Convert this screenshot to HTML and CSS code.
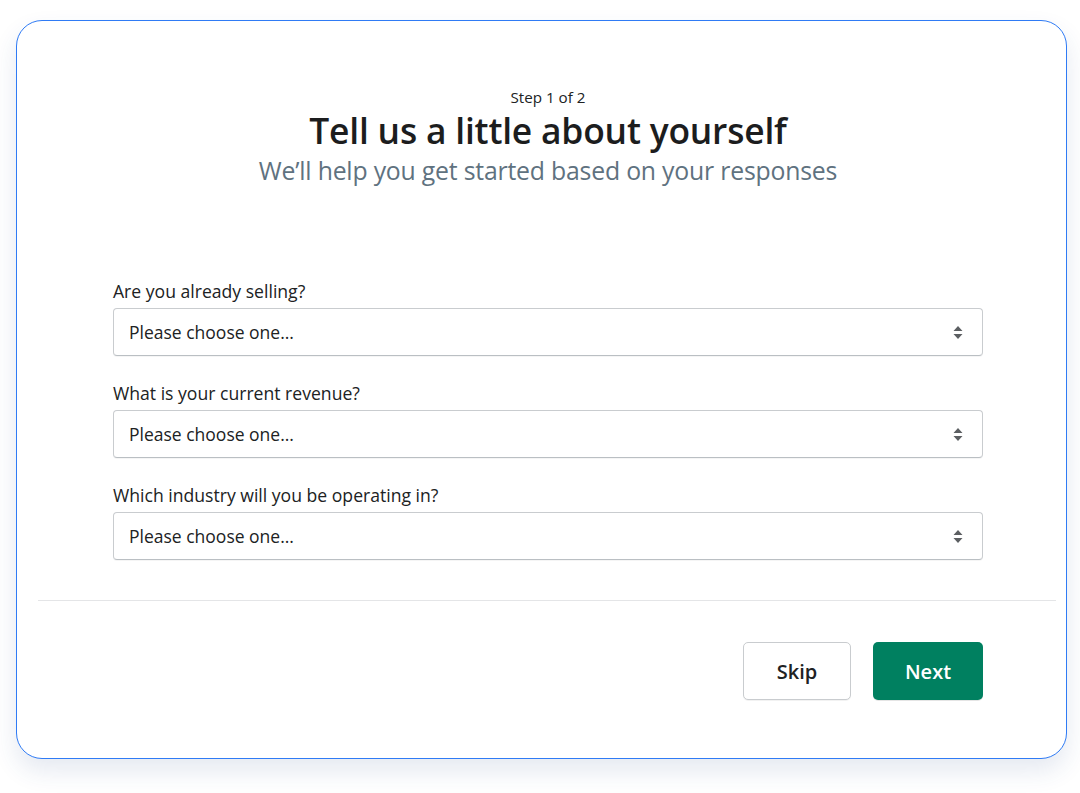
FILE: index.html
```html
<!DOCTYPE html>
<html lang="en">
<head>
<meta charset="utf-8">
<title>Tell us a little about yourself</title>
<link rel="stylesheet" href="styles.css">
</head>
<body>
<main class="card">
  <header class="intro">
    <p class="step">Step 1 of 2</p>
    <h1 class="title">Tell us a little about yourself</h1>
    <p class="subtitle">We’ll help you get started based on your responses</p>
  </header>
  <form class="fields">
    <label class="field">
      <span class="label">Are you already selling?</span>
      <span class="select">
        <span class="select-text">Please choose one...</span>
        <svg class="arrows" width="10" height="15" viewBox="0 0 10 15"><path d="M5 1 L9.5 6 H0.5 Z M5 14 L9.5 9 H0.5 Z" fill="#5c5f62"/></svg>
      </span>
    </label>
    <label class="field">
      <span class="label">What is your current revenue?</span>
      <span class="select">
        <span class="select-text">Please choose one...</span>
        <svg class="arrows" width="10" height="15" viewBox="0 0 10 15"><path d="M5 1 L9.5 6 H0.5 Z M5 14 L9.5 9 H0.5 Z" fill="#5c5f62"/></svg>
      </span>
    </label>
    <label class="field">
      <span class="label">Which industry will you be operating in?</span>
      <span class="select">
        <span class="select-text">Please choose one...</span>
        <svg class="arrows" width="10" height="15" viewBox="0 0 10 15"><path d="M5 1 L9.5 6 H0.5 Z M5 14 L9.5 9 H0.5 Z" fill="#5c5f62"/></svg>
      </span>
    </label>
  </form>
  <hr class="divider">
  <footer class="actions">
    <button class="btn btn-skip" type="button">Skip</button>
    <button class="btn btn-next" type="button">Next</button>
  </footer>
</main>
</body>
</html>
```
FILE: styles.css
```css
* { box-sizing: border-box; }
html, body { margin: 0; padding: 0; background: #ffffff; }
body {
  font-family: "Open Sans", "Noto Sans", Arial, sans-serif;
  color: #202223;
  padding: 20px 0 34px 16px;
  min-height: 793px;
}
.card {
  width: 1051px;
  height: 739px;
  border: 1.5px solid #2f7bf5;
  border-radius: 26px;
  background: #fff;
  box-shadow: 0 12px 24px rgba(40, 70, 140, 0.12);
  display: flex;
  flex-direction: column;
}
.intro {
  margin: 66px 0 0 96px;
  width: 870px;
  text-align: center;
}
.step {
  margin: 0;
  font-size: 15.2px;
  line-height: 20px;
  color: #202223;
}
.title {
  margin: 1px 0 0;
  font-size: 35.4px;
  line-height: 44px;
  font-weight: 600;
  color: #1c1d1e;
  letter-spacing: -0.2px;
}
.subtitle {
  margin: 2px 0 0;
  font-size: 24.8px;
  line-height: 32px;
  color: #5f7280;
  letter-spacing: -0.2px;
}
.fields {
  margin: 93px 0 0 96px;
  width: 870px;
  display: flex;
  flex-direction: column;
  gap: 25px;
}
.field { display: flex; flex-direction: column; }
.label {
  font-size: 17.6px;
  line-height: 24px;
  margin-bottom: 5px;
  color: #202223;
}
.select {
  height: 48px;
  border: 1px solid #c9cccf;
  border-bottom-color: #babfc3;
  border-radius: 4px;
  box-shadow: 0 1px 0 rgba(0, 0, 0, 0.04);
  display: flex;
  align-items: center;
  justify-content: space-between;
  padding: 0 19px 0 15px;
}
.select-text { font-size: 17.5px; color: #202223; }
.arrows { display: block; }
.divider {
  margin: 40px 0 0 21px;
  width: 1018px;
  border: 0;
  border-top: 1px solid #e4e5e7;
}
.actions {
  margin: 41px 0 0 96px;
  width: 870px;
  display: flex;
  justify-content: flex-end;
  gap: 22px;
}
.btn {
  height: 58px;
  border-radius: 5px;
  font-family: inherit;
  font-size: 20px;
  font-weight: 600;
  cursor: pointer;
}
.btn-skip {
  width: 108px;
  background: #fff;
  color: #202223;
  border: 1px solid #c9cccf;
  box-shadow: 0 1px 0 rgba(0, 0, 0, 0.05);
}
.btn-next {
  width: 110px;
  background: #008060;
  color: #fff;
  border: 0;
  box-shadow: 0 1px 0 rgba(0, 0, 0, 0.1);
}
```
